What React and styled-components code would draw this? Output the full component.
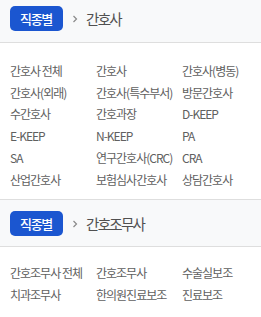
import React from 'react';
import styled, { createGlobalStyle } from 'styled-components';

const GlobalStyle = createGlobalStyle`
  html, body {
    margin: 0;
    padding: 0;
    background: #ffffff;
  }
  body {
    font-family: "Noto Sans CJK KR", "Noto Sans", sans-serif;
  }
`

const Wrap = styled.div`
  width: 261px;
  overflow: hidden;
`

const Header = styled.div`
  display: flex;
  align-items: center;
  height: 25px;
  padding: ${({ $first }) => ($first ? '6px 10px 11px' : '11px 10px 10px')};
  background-color: #f8f9fa;
  border-top: ${({ $first }) => ($first ? 'none' : '1px solid #dedede')};
  border-bottom: 1px solid #dedede;
`

const Badge = styled.div`
  height: 25px;
  width: 53px;
  box-sizing: border-box;
  border-radius: 5px;
  background-color: #1b56d0;
  color: #ffffff;
  font-size: 13px;
  font-weight: 500;
  letter-spacing: -1.3px;
  display: flex;
  align-items: center;
  justify-content: center;
  padding-right: 1px;
`

const Chevron = styled.svg`
  width: 6px;
  height: 8px;
  margin: 1px 8px 0 9px;
`

const Title = styled.div`
  font-size: 14.5px;
  letter-spacing: -1.7px;
  color: #505050;
  line-height: 25px;
`

const List = styled.div`
  display: grid;
  grid-template-columns: repeat(3, 86px);
  padding: ${({ $pt }) => $pt} 0 9px 10px;
`

const Item = styled.div`
  font-size: 12px;
  letter-spacing: -1px;
  line-height: 21.7px;
  color: #606060;
  white-space: nowrap;
  cursor: pointer;
  &:hover {
    color: #1b56d0;
  }
`

const sections = [
  {
    title: '간호사',
    pt: '17px',
    items: [
      '간호사 전체', '간호사', '간호사(병동)',
      '간호사(외래)', '간호사(특수부서)', '방문간호사',
      '수간호사', '간호과장', 'D-KEEP',
      'E-KEEP', 'N-KEEP', 'PA',
      'SA', '연구간호사(CRC)', 'CRA',
      '산업간호사', '보험심사간호사', '상담간호사',
    ],
  },
  {
    title: '간호조무사',
    pt: '15px',
    items: [
      '간호조무사 전체', '간호조무사', '수술실보조',
      '치과조무사', '한의원진료보조', '진료보조',
    ],
  },
]

export default function App () {
  return (
    <Wrap>
      <GlobalStyle />
      {sections.map((section, idx) => (
        <React.Fragment key={section.title}>
          <Header $first={idx === 0}>
            <Badge>직종별</Badge>
            <Chevron viewBox='0 0 6 8'>
              <path d='M1.5 1 L4.5 4 L1.5 7' fill='none' stroke='#8a8a8a' strokeWidth='1.2' />
            </Chevron>
            <Title>{section.title}</Title>
          </Header>
          <List $pt={section.pt}>
            {section.items.map((item) => <Item key={item}>{item}</Item>)}
          </List>
        </React.Fragment>
      ))}
    </Wrap>
  )
}
